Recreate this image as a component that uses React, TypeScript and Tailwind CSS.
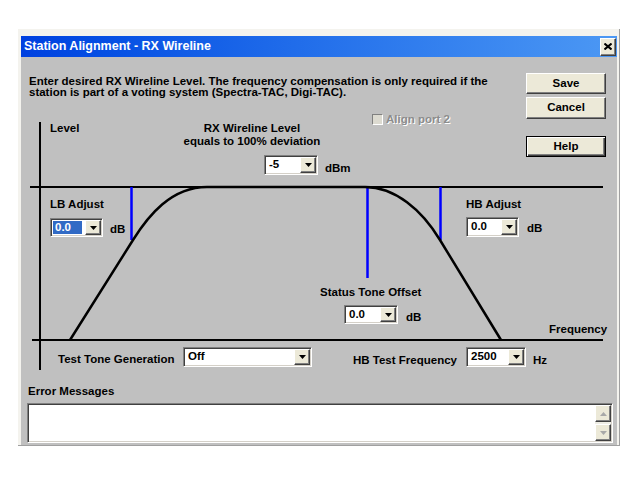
import React from "react";

/* ── Classic 3D bevels ─────────────────────────────────────────────────────── */
const raised =
  "bg-[#ece9d8] border border-t-white border-l-white border-r-[#404040] border-b-[#404040] shadow-[inset_-1px_-1px_0_#808080]";
const sunken =
  "border border-t-[#808080] border-l-[#808080] border-r-white border-b-white shadow-[inset_1px_1px_0_#404040,inset_-1px_-1px_0_#d4d0c8]";

function Arrow({ up = false, color = "#000" }: { up?: boolean; color?: string }) {
  return (
    <svg width="7" height="4" viewBox="0 0 7 4" className="block">
      <path d={up ? "M3.5 0 L7 4 L0 4 Z" : "M0 0 L7 0 L3.5 4 Z"} fill={color} />
    </svg>
  );
}

/* ── Combo box ─────────────────────────────────────────────────────────────── */
function Combo({
  value,
  className,
  selected = false,
}: {
  value: string;
  className: string;
  selected?: boolean;
}) {
  return (
    <div className={`absolute flex bg-white ${sunken} ${className}`}>
      <div className="flex flex-1 items-center p-[2px]">
        <span
          className={`flex h-full flex-1 items-center pl-[2px] text-[11.5px] font-bold leading-none ${
            selected ? "bg-[#316ac5] text-white" : "text-black"
          }`}
        >
          {value}
        </span>
      </div>
      <div className={`m-[1px] flex w-[16px] items-center justify-center ${raised}`}>
        <Arrow />
      </div>
    </div>
  );
}

function Label({ text, className }: { text: string; className: string }) {
  return (
    <span className={`absolute whitespace-nowrap text-[11.5px] font-bold leading-[12px] text-black ${className}`}>
      {text}
    </span>
  );
}

/* ── Filter-shape diagram ──────────────────────────────────────────────────── */
function Diagram() {
  return (
    <svg width="596" height="323" className="pointer-events-none absolute left-0 top-0">
      <g stroke="#000" strokeWidth="2" shapeRendering="crispEdges">
        <line x1="19" y1="65" x2="19" y2="313" />
        <line x1="9" y1="130" x2="582" y2="130" />
        <line x1="11" y1="283" x2="582" y2="283" />
      </g>
      <g stroke="#0000ff" strokeWidth="2.5">
        <line x1="110.5" y1="130" x2="110.5" y2="183" />
        <line x1="419.5" y1="130" x2="419.5" y2="183" />
        <line x1="346.5" y1="130" x2="346.5" y2="221" />
      </g>
      <path
        d="M49 283 L112 183 C127 159 150 130 186 130 L344 130 C374 130 401 153 419 183 L480 283"
        fill="none"
        stroke="#000"
        strokeWidth="2.5"
      />
    </svg>
  );
}

export default function App() {
  return (
    <div className="min-h-[480px] w-[640px] bg-white pl-[18px] pt-[29px] font-['Liberation_Sans',Arial,sans-serif]">
      <div className="h-[417px] w-[602px] border-b border-r border-[#a0a0a0] bg-[#f4f3ee] pl-[3px] pr-[2px] pt-[7px]">
        {/* Title bar */}
        <div className="flex h-[21px] items-center justify-between bg-gradient-to-r from-[#0040e0] to-[#4c98f4] pl-[3px] pr-[1px]">
          <span className="text-[12.5px] font-bold leading-none text-white">Station Alignment - RX Wireline</span>
          <div className={`flex h-[18px] w-[16px] items-center justify-center ${raised}`}>
            <svg width="8" height="7" viewBox="0 0 8 7">
              <path d="M0.5 0.5 L7.5 6.5 M7.5 0.5 L0.5 6.5" stroke="#000" strokeWidth="2" />
            </svg>
          </div>
        </div>

        {/* Body */}
        <div className="flex h-[388px] flex-col bg-[#c0c0c0]">
          <div className="relative h-[323px]">
            <Diagram />

            <div className="flex justify-between pl-[8px] pr-[11px] pt-[16px]">
              <p className="mt-[3px] text-[11.5px] font-bold leading-[11px] text-black">
                Enter desired RX Wireline Level. The frequency compensation is only required if the
                <br />
                station is part of a voting system (Spectra-TAC, Digi-TAC).
              </p>
              <div className="relative flex flex-col gap-[3px]">
                <button className={`h-[21px] w-[80px] text-[11.5px] font-bold text-black ${raised}`}>Save</button>
                <button className={`h-[22px] w-[80px] text-[11.5px] font-bold text-black ${raised}`}>Cancel</button>
                <button className="mt-[14px] h-[21px] w-[80px] border border-black bg-[#ece9d8] text-[11.5px] font-bold text-black shadow-[inset_1px_1px_0_#fff,inset_-1px_-1px_0_#404040,inset_-2px_-2px_0_#808080]">
                  Help
                </button>
              </div>
            </div>

            {/* Align port 2 (disabled) */}
            <div className="absolute left-[351px] top-[56px] flex items-center gap-[3px]">
              <div className="h-[11px] w-[11px] border border-t-[#808080] border-l-[#808080] border-r-white border-b-white bg-[#dcdad0]" />
              <span className="text-[11.5px] font-bold leading-[12px] text-[#8c8c8c] [text-shadow:1px_1px_0_#fff]">
                Align port 2
              </span>
            </div>

            <Label text="Level" className="left-[29px] top-[65px]" />
            <div className="absolute left-[231px] top-[65px] -translate-x-1/2 whitespace-nowrap text-center text-[11.5px] font-bold leading-[13px] text-black">
              RX Wireline Level
              <br />
              equals to 100% deviation
            </div>
            <Combo value="-5" className="left-[243px] top-[98px] h-[20px] w-[54px]" />
            <Label text="dBm" className="left-[304px] top-[105px]" />

            <Label text="LB Adjust" className="left-[29px] top-[141px]" />
            <Combo value="0.0" selected className="left-[29px] top-[161px] h-[19px] w-[53px]" />
            <Label text="dB" className="left-[89px] top-[166px]" />

            <Label text="HB Adjust" className="left-[445px] top-[141px]" />
            <Combo value="0.0" className="left-[445px] top-[160px] h-[20px] w-[53px]" />
            <Label text="dB" className="left-[506px] top-[165px]" />

            <Label text="Status Tone Offset" className="left-[299px] top-[229px]" />
            <Combo value="0.0" className="left-[323px] top-[248px] h-[19px] w-[54px]" />
            <Label text="dB" className="left-[385px] top-[254px]" />

            <Label text="Frequency" className="left-[528px] top-[266px]" />

            <Label text="Test Tone Generation" className="left-[37px] top-[296px]" />
            <Combo value="Off" className="left-[162px] top-[290px] h-[20px] w-[129px]" />
            <Label text="HB Test Frequency" className="left-[332px] top-[297px]" />
            <Combo value="2500" className="left-[445px] top-[290px] h-[20px] w-[60px]" />
            <Label text="Hz" className="left-[512px] top-[297px]" />
          </div>

          {/* Error messages */}
          <div className="mt-[5px] pl-[7px] text-[11.5px] font-bold leading-[12px] text-black">Error Messages</div>
          <div className={`ml-[6px] mt-[6px] flex h-[40px] w-[586px] bg-white ${sunken}`}>
            <div className="flex-1" />
            <div className="my-[1px] mr-[1px] flex w-[16px] flex-col bg-[#eeede5]">
              <div className={`flex h-[17px] items-center justify-center ${raised}`}>
                <Arrow up color="#a8a8a8" />
              </div>
              <div className="flex-1" />
              <div className={`flex h-[17px] items-center justify-center ${raised}`}>
                <Arrow color="#a8a8a8" />
              </div>
            </div>
          </div>
        </div>
      </div>
    </div>
  );
}
